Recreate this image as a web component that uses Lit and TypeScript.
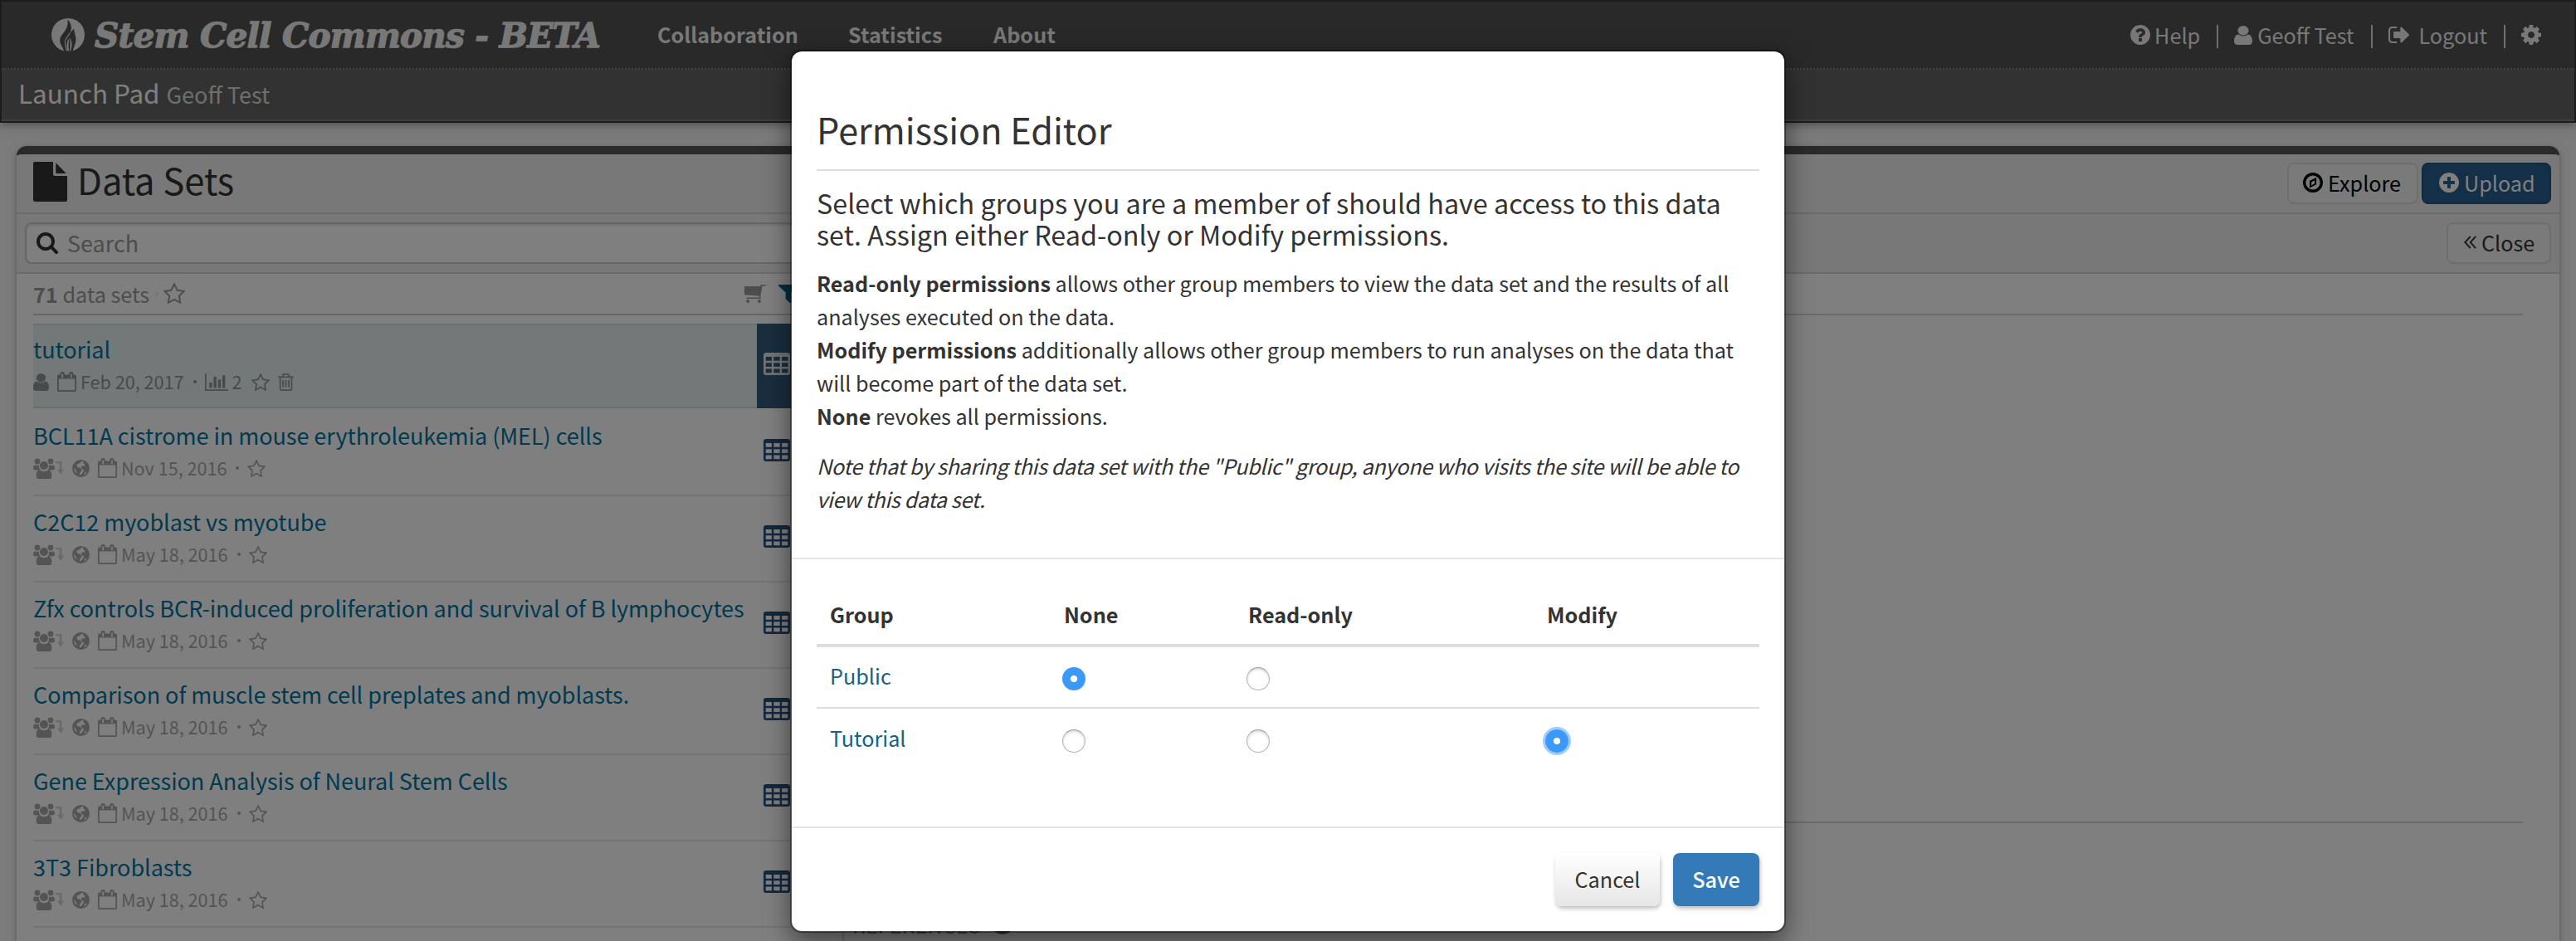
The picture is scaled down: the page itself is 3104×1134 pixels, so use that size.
import { LitElement, html, css, svg } from "lit";
import { customElement } from "lit/decorators.js";
import { classMap } from "lit/directives/class-map.js";

interface Glyph {
  box: string;
  body: unknown;
}

const disc =
  "M1664 896q0 209-103 385.5t-279.5 279.5-385.5 103-385.5-103-279.5-279.5-103-385.5 103-385.5 279.5-279.5 385.5-103 385.5 103 279.5 279.5 103 385.5z";

const glyphs: Record<string, Glyph> = {
  logo: {
    box: "0 0 40 40",
    body: svg`<circle cx="20" cy="20" r="20"/><path fill="#525252" d="M19.300 1.500C22.800 4.500 24.600 9.500 23.600 14c-.3 1.600-.8 2.900-1.400 4.200 1.300-2.200 3.200-4 5.200-5.200-.4 4.400 2.400 8 2 13.400-.3 5-2.800 8.200-4 13.800H15.200C14.400 35 9.800 31.500 10.200 26c.4-4.800 4-7.600 6.600-11.600C19 10.800 20.200 6.600 19.300 1.500z"/><path fill="none" stroke="currentColor" stroke-width="1.100" d="M22.600 17.500c-2.400 4-6 6.500-6.200 11.500-.1 3.600 1 6.600 1.800 10.500"/><path d="M21.600 23.500c-3.200 4.200-3.800 9.600-2.200 16h1.800c-1-5.500-.8-10.500.4-16zM22 23.500c1.800 3.200 3.400 7.500 2.200 12-.4 1.500-.9 2.800-1.200 4h-.9c.4-5.500.6-10.500-.1-16z"/>`,
  },
  help: {
    box: "128 128 1536 1536",
    body: svg`<path fill-rule="evenodd" d="M1024 1376v-192q0-14-9-23t-23-9h-192q-14 0-23 9t-9 23v192q0 14 9 23t23 9h192q14 0 23-9t9-23zm256-672q0-88-55.5-163t-138.5-116-170-41q-243 0-371 213-15 24 8 42l132 100q7 6 19 6 16 0 25-12 53-68 86-92 34-24 86-24 48 0 85.5 26t37.500 59q0 38-20 61t-68 45q-63 28-115.500 86.500t-52.500 125.500v36q0 14 9 23t23 9h192q14 0 23-9t9-23q0-19 21.500-49.500t54.500-49.500q32-18 49-28.500t46-35 44.500-48 28-60.500 12.500-81z${disc}"/>`,
  },
  user: {
    box: "256 128 1280 1536",
    body: svg`<path d="M1536 1399q0 109-62.500 187t-150.500 78h-854q-88 0-150.500-78t-62.500-187q0-85 8.500-160.500t31.500-152 58.500-131 94-89 134.500-34.500q131 128 313 128t313-128q76 0 134.500 34.500t94 89 58.500 131 31.500 152 8.500 160.500zm-256-887q0 159-112.500 271.500t-271.500 112.500-271.500-112.500-112.500-271.500 112.500-271.500 271.500-112.500 271.500 112.500 112.500 271.500z"/>`,
  },
  logout: {
    box: "64 256 1568 1280",
    body: svg`<path d="M704 1440q0 4 1 20t.5 26.500-3 23.500-10 19.500-20.500 6.500h-320q-119 0-203.500-84.500t-84.500-203.500v-704q0-119 84.500-203.500t203.500-84.500h320q13 0 22.500 9.500t9.500 22.500q0 4 1 20t.5 26.500-3 23.500-10 19.500-20.500 6.500h-320q-66 0-113 47t-47 113v704q0 66 47 113t113 47h312l11.500 1 11.500 3 8 5.500 7 9 2 13.500zm928-544q0 26-19 45l-544 544q-19 19-45 19t-45-19-19-45v-288h-448q-26 0-45-19t-19-45v-384q0-26 19-45t45-19h448v-288q0-26 19-45t45-19 45 19l544 544q19 19 19 45z"/>`,
  },
  gear: {
    box: "128 128 1536 1536",
    body: svg`<path d="M1152 896q0-106-75-181t-181-75-181 75-75 181 75 181 181 75 181-75 75-181zm512-109v222q0 12-8 23t-20 13l-185 28q-19 54-39 91 35 50 107 138 10 12 10 25t-9 23q-27 37-99 108t-94 71q-12 0-26-9l-138-108q-44 23-91 38-16 136-29 186-7 28-36 28h-222q-14 0-24.500-8.500t-11.500-21.500l-28-184q-49-16-90-37l-141 107q-10 9-25 9-14 0-25-11-126-114-165-168-7-10-7-23 0-12 8-23 15-21 51-66.500t54-70.500q-27-50-41-99l-183-27q-13-2-21-12.500t-8-23.500v-222q0-12 8-23t19-13l186-28q14-46 39-92-40-57-107-138-10-12-10-24 0-10 9-23 26-36 98.500-107.500t94.500-71.500q13 0 26 10l138 107q44-23 91-38 16-136 29-186 7-28 36-28h222q14 0 24.500 8.500t11.500 21.500l28 184q49 16 90 37l142-107q9-9 24-9 13 0 25 10 129 119 165 170 7 8 7 22 0 12-8 23-15 21-51 66.500t-54 70.500q26 50 41 98l183 28q13 2 21 12.500t8 23.500z"/>`,
  },
  plus: {
    box: "128 128 1536 1536",
    body: svg`<path fill-rule="evenodd" d="M1344 960v-128q0-26-19-45t-45-19h-256v-256q0-26-19-45t-45-19h-128q-26 0-45 19t-19 45v256h-256q-26 0-45 19t-19 45v128q0 26 19 45t45 19h256v256q0 26 19 45t45 19h128q26 0 45-19t19-45v-256h256q26 0 45-19t19-45z${disc}"/>`,
  },
  compass: {
    box: "0 0 24 24",
    body: svg`<circle cx="12" cy="12" r="10.300" fill="none" stroke="currentColor" stroke-width="3.400"/><path fill-rule="evenodd" d="M16.200 5.800v8.400l-8.200 4.200V10zM10.200 11.400v4L14 13.200V9.600z"/>`,
  },
  chevrons: {
    box: "0 0 15 16",
    body: svg`<path fill="none" stroke="currentColor" stroke-width="1.900" d="M7.800.8 1.300 8l6.500 7.200M14.200.8 7.700 8l6.500 7.200"/>`,
  },
  file: {
    box: "0 0 41 48",
    body: svg`<path d="M2 0h22v14.500q0 2.500 2.500 2.500H41v29q0 2-2 2H2q-2 0-2-2V2q0-2 2-2zM27.300 1.200 39.800 14H27.300z"/>`,
  },
  search: {
    box: "64 128 1664 1664",
    body: svg`<path d="M1216 832q0-185-131.500-316.500t-316.500-131.500-316.500 131.500-131.500 316.500 131.500 316.500 316.500 131.500 316.500-131.500 131.500-316.500zm512 832q0 52-38 90t-90 38q-54 0-90-38l-343-342q-179 124-399 124-143 0-273.500-55.500t-225-150-150-225-55.500-273.500 55.500-273.500 150-225 225-150 273.500-55.500 273.500 55.500 225 150 150 225 55.500 273.500q0 220-124 399l343 343q37 37 37 90z"/>`,
  },
  star: {
    box: "64 32 1664 1587",
    body: svg`<path d="M1201 1004l306-297-422-62-189-382-189 382-422 62 306 297-73 421 378-199 377 199zm527-357q0 22-26 48l-363 354 86 500q1 7 1 20 0 50-41 50-19 0-40-12l-449-236-449 236q-22 12-40 12-21 0-31.500-14.500t-10.500-35.500q0-6 2-20l86-500-364-354q-25-27-25-48 0-37 56-46l502-73 225-455q19-41 49-41t49 41l225 455 502 73q56 9 56 46z"/>`,
  },
  trash: {
    box: "192 128 1408 1536",
    body: svg`<path d="M704 736v576q0 14-9 23t-23 9h-64q-14 0-23-9t-9-23v-576q0-14 9-23t23-9h64q14 0 23 9t9 23zm256 0v576q0 14-9 23t-23 9h-64q-14 0-23-9t-9-23v-576q0-14 9-23t23-9h64q14 0 23 9t9 23zm256 0v576q0 14-9 23t-23 9h-64q-14 0-23-9t-9-23v-576q0-14 9-23t23-9h64q14 0 23 9t9 23zm128 724v-948h-896v948q0 22 7 40.500t14.500 27 10.500 8.500h832q3 0 10.500-8.500t14.500-27 7-40.500zm-672-1076h448l-48-117q-7-9-17-11h-317q-10 2-17 11zm928 32v64q0 14-9 23t-23 9h-96v948q0 83-47 143.500t-113 60.500h-832q-66 0-113-58.500t-47-141.500v-952h-96q-14 0-23-9t-9-23v-64q0-14 9-23t23-9h309l70-167q15-37 54-63t79-26h320q40 0 79 26t54 63l70 167h309q14 0 23 9t9 23z"/>`,
  },
  calendar: {
    box: "64 0 1664 1792",
    body: svg`<path fill-rule="evenodd" d="M192 1664h1408v-1024h-1408v1024zm384-1152v-288q0-14-9-23t-23-9h-64q-14 0-23 9t-9 23v288q0 14 9 23t23 9h64q14 0 23-9t9-23zm768 0v-288q0-14-9-23t-23-9h-64q-14 0-23 9t-9 23v288q0 14 9 23t23 9h64q14 0 23-9t9-23zm384-128v1280q0 52-38 90t-90 38h-1408q-52 0-90-38t-38-90v-1280q0-52 38-90t90-38h128v-96q0-66 47-113t113-47h64q66 0 113 47t47 113v96h384v-96q0-66 47-113t113-47h64q66 0 113 47t47 113v96h128q52 0 90 38t38 90z"/>`,
  },
  chart: {
    box: "0 0 28 21",
    body: svg`<path d="M0 0h1.700v19.300H28V21H0zM5.200 11h3.400v6.500H5.200zM10.400 4h3.400v13.500h-3.400zM15.700 7.500h3.400v10h-3.400zM21 2.200h3.400v15.300H21z"/>`,
  },
  group: {
    box: "0 0 26 25",
    body: svg`<circle cx="5" cy="4" r="3.400"/><circle cx="21" cy="4" r="3.400"/><circle cx="13" cy="9" r="5"/><path d="M2.200 8.200q2.800 1.600 5 0-.9 3.800 1.600 6.200H2.300Q0 14.400 0 12.200q0-3 2.200-4zM23.800 8.200q-2.800 1.600-5 0 .9 3.800-1.600 6.200h6.500q2.300 0 2.300-2.200 0-3-2.200-4zM7.600 14.600q5.400 3.600 10.800 0 4 .6 4 6.800 0 3.600-3.200 3.600H6.800q-3.200 0-3.200-3.600 0-6.200 4-6.800z"/>`,
  },
  arrow: {
    box: "0 0 10 16",
    body: svg`<path d="M0 0h7.400v9.800H10L6.100 16 2.200 9.800h2.600V2.600H0z"/>`,
  },
  globe: {
    box: "0 0 21 21",
    body: svg`<path fill-rule="evenodd" d="M10.500 0a10.500 10.500 0 1 1 0 21 10.500 10.500 0 0 1 0-21zM12.600 1.500l-2.400 1.300-1.400 2-2.400.3-1.200 2.500 1.700 1.600 2.600.4 2.200 2.200-1 2.200-1.600 1.800.2 3.200 3.400-3.600 1.500-2.600-2.200-1.600-1.600-2.300 2.200-1.300 2-.2 1.200-1.500-1.800-1.200zM1.600 9.600l1.300 4.200 2.700 3-.6-3.400zM15.800 14.600l-1.600 3.800q2.200-1 3.400-3.200z"/>`,
  },
  cart: {
    box: "0 0 26 22",
    body: svg`<path d="M0 2h19.200l.8-2h6v1.600h-4.400L19.400 13.800 0 12.200zM17.600 13.600h1.800v2.200h-1.800zM2.400 15.600h17.200V17H2.400z"/><circle cx="4.200" cy="20" r="2"/><circle cx="18" cy="20" r="2"/>`,
  },
  filter: {
    box: "192 256 1408 1408",
    body: svg`<path d="M1595 295q17 41-14 70l-493 493v742q0 42-39 59-13 5-25 5-27 0-45-19l-256-256q-19-19-19-45v-486l-493-493q-31-29-14-70 17-39 59-39h1280q42 0 59 39z"/>`,
  },
  table: {
    box: "0 0 32 27",
    body: svg`<path fill-rule="evenodd" d="M3 0h26q3 0 3 3v21q0 3-3 3H3q-3 0-3-3V3q0-3 3-3zM2.700 5v4.700h7.200V5zm9.600 0v4.700h7.400V5zm9.800 0v4.700h7.300V5zM2.700 12.200v4.700h7.200v-4.700zm9.600 0v4.700h7.400v-4.700zm9.800 0v4.700h7.300v-4.700zM2.700 19.400v4.800h7.200v-4.800zm9.600 0v4.800h7.400v-4.800zm9.800 0v4.800h7.300v-4.800z"/>`,
  },
};

const icon = (name: string) => html`<svg
  class="icon ${name}"
  viewBox=${glyphs[name].box}
  preserveAspectRatio="none"
  aria-hidden="true"
>${glyphs[name].body}</svg>`;

const shared = css`
  * {
    box-sizing: border-box;
  }
  .icon {
    display: block;
    flex: none;
    fill: currentColor;
  }
`;

interface DataSet {
  title: string;
  date: string;
  own?: boolean;
  analyses?: number;
}

const dataSets: DataSet[] = [
  { title: "tutorial", date: "Feb 20, 2017", own: true, analyses: 2 },
  { title: "BCL11A cistrome in mouse erythroleukemia (MEL) cells", date: "Nov 15, 2016" },
  { title: "C2C12 myoblast vs myotube", date: "May 18, 2016" },
  { title: "Zfx controls BCR-induced proliferation and survival of B lymphocytes", date: "May 18, 2016" },
  { title: "Comparison of muscle stem cell preplates and myoblasts.", date: "May 18, 2016" },
  { title: "Gene Expression Analysis of Neural Stem Cells", date: "May 18, 2016" },
  { title: "3T3 Fibroblasts", date: "May 18, 2016" },
];

@customElement("site-header")
export class SiteHeader extends LitElement {
  static styles = [
    shared,
    css`
      :host {
        display: block;
        height: 148px;
        border: 2px solid #383838;
        box-shadow: 0 2px 10px rgba(0, 0, 0, 0.4);
      }
      .bar {
        display: flex;
        height: 82px;
        background: #525252;
        border-bottom: 2px dotted #868686;
        color: #f0f0f0;
        font-size: 25.2px;
        line-height: 78px;
        white-space: nowrap;
      }
      .icon.logo {
        width: 40px;
        height: 40px;
        margin: 20px 12px 0 60px;
      }
      .brand {
        width: 678px;
        font: italic bold 40.5px/82px "DejaVu Serif", serif;
        letter-spacing: -0.75px;
        -webkit-text-stroke: 1.3px currentColor;
      }
      .nav {
        font-weight: bold;
      }
      .nav.first {
        width: 230px;
      }
      .nav.second {
        width: 175px;
      }
      .tools {
        display: flex;
        align-items: center;
        height: 80px;
        margin-left: auto;
        padding-right: 40px;
      }
      .pipe {
        width: 2px;
        height: 28px;
        margin: 4px 19px 0 20px;
        background: #dedede;
      }
      .help,
      .gear {
        width: 24px;
        height: 24px;
      }
      .help {
        margin-right: 5px;
      }
      .user {
        width: 22px;
        height: 23px;
        margin-right: 6px;
      }
      .logout {
        width: 25px;
        height: 20px;
        margin-right: 12px;
      }
      .sub {
        display: flex;
        height: 62px;
        background: #646464;
        border-bottom: 2px solid #7c7c7c;
        padding-left: 20px;
        color: #fff;
        font-size: 31.4px;
        line-height: 56px;
        white-space: nowrap;
      }
      .who {
        margin-left: 8px;
        font-size: 27px;
        line-height: 60px;
        color: #dcdcdc;
      }
    `,
  ];

  render() {
    return html`
      <div class="bar">
        ${icon("logo")}
        <span class="brand">Stem Cell Commons - BETA</span>
        <span class="nav first">Collaboration</span>
        <span class="nav second">Statistics</span>
        <span class="nav">About</span>
        <div class="tools">
          ${icon("help")}<span>Help</span><i class="pipe"></i>
          ${icon("user")}<span>Geoff Test</span><i class="pipe"></i>
          ${icon("logout")}<span>Logout</span><i class="pipe"></i>
          ${icon("gear")}
        </div>
      </div>
      <div class="sub"><span>Launch Pad</span><span class="who">Geoff Test</span></div>
    `;
  }
}

@customElement("data-set-row")
export class DataSetRow extends LitElement {
  static properties = { item: { attribute: false } };
  declare item: DataSet;

  static styles = [
    shared,
    css`
      :host {
        display: block;
      }
      .row {
        display: flex;
        height: 104px;
        border-bottom: 2px solid #e8e8e8;
        white-space: nowrap;
      }
      .row.active {
        height: 102px;
        margin-bottom: 2px;
        background: #e6f0f1;
        border-top: 2px solid #d6e3e6;
        border-bottom: 2px solid #cfdde3;
      }
      .text {
        width: 872px;
        padding-top: 11px;
      }
      .active .text {
        padding-top: 9px;
      }
      .title {
        font-size: 27px;
        line-height: 40px;
        letter-spacing: -0.04px;
        color: #0074a2;
      }
      .meta {
        display: flex;
        align-items: center;
        height: 24px;
        margin-top: 7px;
        font-size: 21.6px;
        line-height: 24px;
        color: #a9a9a9;
      }
      .active .meta {
        color: #8f9797;
      }
      .user {
        width: 19px;
        height: 21px;
        margin-right: 10px;
      }
      .group {
        width: 26px;
        height: 25px;
        margin-right: 1px;
      }
      .arrow {
        width: 10px;
        height: 16px;
        margin-right: 10px;
        opacity: 0.5;
      }
      .globe {
        width: 21px;
        height: 21px;
        margin-right: 10px;
      }
      .calendar {
        width: 23px;
        height: 24px;
        margin-right: 5px;
      }
      .dot {
        width: 4px;
        height: 4px;
        margin: 0 10px 0 11px;
        border-radius: 2px;
        background: currentColor;
      }
      .star {
        width: 22px;
        height: 21px;
      }
      .chart {
        width: 28px;
        height: 21px;
        margin-right: 5px;
      }
      .count {
        margin-right: 11px;
      }
      .trash {
        width: 19px;
        height: 21px;
        margin-left: 10px;
      }
      .side {
        flex: 1;
        padding: 35px 0 0 8px;
        color: #255180;
      }
      .active .side {
        margin: -2px 0;
        background: #345c7c;
        color: #e8e8e8;
      }
      .table {
        width: 32px;
        height: 27px;
      }
    `,
  ];

  render() {
    const d = this.item;
    return html`
      <div class=${classMap({ row: true, active: !!d.own })}>
        <div class="text">
          <div class="title">${d.title}</div>
          <div class="meta">
            ${d.own ? icon("user") : html`${icon("group")}${icon("arrow")}${icon("globe")}`}
            ${icon("calendar")}<span>${d.date}</span><i class="dot"></i>
            ${d.analyses ? html`${icon("chart")}<span class="count">${d.analyses}</span>` : ""}
            ${icon("star")}${d.own ? icon("trash") : ""}
          </div>
        </div>
        <div class="side">${icon("table")}</div>
      </div>
    `;
  }
}

@customElement("data-set-panel")
export class DataSetPanel extends LitElement {
  static styles = [
    shared,
    css`
      :host {
        display: block;
        margin: 28px 20px 0;
        border-top: 10px solid #545454;
        border-radius: 12px 12px 0 0;
        background: #fff;
        box-shadow: 0 2px 6px rgba(0, 0, 0, 0.35);
        height: 958px;
        overflow: hidden;
      }
      .head,
      .tools {
        display: flex;
        height: 72px;
        padding: 0 10px;
        background: #f0f0f0;
        border-bottom: 2px solid #d6d6d6;
        white-space: nowrap;
      }
      .icon.file {
        width: 41px;
        height: 48px;
        margin: 9px 12px 0 10px;
        color: #333;
      }
      .name {
        flex: 1;
        font-size: 43.5px;
        line-height: 62px;
        color: #333;
      }
      .button {
        display: flex;
        align-items: center;
        height: 50px;
        margin-top: 10px;
        border: 2px solid #dcdcdc;
        border-radius: 8px;
        background: #f4f4f4;
        padding: 0 0 2px 17px;
        font-size: 25.2px;
        line-height: 44px;
        color: #000;
        width: 158px;
      }
      .button .icon {
        width: 24px;
        height: 24px;
        margin-right: 6px;
      }
      .button.upload {
        width: 156px;
        margin-left: 4px;
        padding-left: 19px;
        background: #285e90;
        border-color: #23507c;
        color: #fff;
      }
      .button.close {
        width: 126px;
        padding-left: 19px;
        color: #333;
      }
      .button .icon.chevrons {
        width: 15px;
        height: 16px;
      }
      .tools {
        justify-content: space-between;
      }
      .query {
        display: flex;
        align-items: center;
        width: 960px;
        height: 50px;
        margin-top: 10px;
        border: 2px solid #ccc;
        border-radius: 8px;
        background: #fff;
        box-shadow: inset 0 2px 3px rgba(0, 0, 0, 0.1);
        padding: 0 0 1px 12px;
        font-size: 27px;
        line-height: 44px;
        color: #999;
      }
      .query .icon {
        width: 26px;
        height: 26px;
        margin-right: 11px;
        color: #333;
      }
      .body {
        display: flex;
      }
      .list {
        width: 997px;
        padding-left: 20px;
        border-right: 2px solid #d8d8d8;
        height: 804px;
      }
      .summary {
        display: flex;
        align-items: center;
        height: 50px;
        border-bottom: 2px solid #cfcfcf;
        margin-bottom: 10px;
        padding-bottom: 1px;
        font-size: 25.2px;
        line-height: 46px;
        color: #9a9a9a;
        white-space: nowrap;
      }
      .summary .star {
        width: 26px;
        height: 25px;
      }
      .point {
        width: 4px;
        height: 4px;
        margin: 0 6px 0 7px;
        border-radius: 2px;
        background: #e8e8e8;
      }
      .icon.cart {
        width: 26px;
        height: 22px;
        margin-left: auto;
      }
      .icon.filter {
        width: 24px;
        height: 22px;
        margin: 0 53px 0 15px;
        color: #006480;
      }
      .rows {
        width: 913px;
      }
      .detail {
        flex: 1;
        padding: 48px 44px 0 10px;
      }
      .rule {
        border-top: 2px solid #d6d6d6;
        height: 612px;
      }
      .section {
        border-top: 2px solid #d6d6d6;
        padding-top: 102px;
        display: flex;
        align-items: center;
        height: 144px;
        font-size: 25.2px;
        line-height: 42px;
        color: #8a8a8a;
      }
      .badge {
        width: 28px;
        height: 28px;
        margin: -4px 0 0 12px;
        border-radius: 14px;
        background: #777;
      }
    `,
  ];

  render() {
    return html`
      <div class="head">
        ${icon("file")}
        <span class="name">Data Sets</span>
        <div class="button">${icon("compass")}<span>Explore</span></div>
        <div class="button upload">${icon("plus")}<span>Upload</span></div>
      </div>
      <div class="tools">
        <div class="query">${icon("search")}<span>Search</span></div>
        <div class="button close">${icon("chevrons")}<span>Close</span></div>
      </div>
      <div class="body">
        <div class="list">
          <div class="summary">
            <span><b>71</b> data sets</span><i class="point"></i>${icon("star")}
            ${icon("cart")}${icon("filter")}
          </div>
          <div class="rows">
            ${dataSets.map((d) => html`<data-set-row .item=${d}></data-set-row>`)}
          </div>
        </div>
        <div class="detail">
          <div class="rule"></div>
          <div class="section"><span>REFERENCES</span><i class="badge"></i></div>
        </div>
      </div>
    `;
  }
}

type Choice = "none" | "read" | "modify";

@customElement("permission-editor")
export class PermissionEditor extends LitElement {
  static styles = [
    shared,
    css`
      :host {
        display: block;
        width: 1200px;
        height: 1064px;
        border: 2px solid rgba(0, 0, 0, 0.4);
        border-radius: 14px;
        background: #fff;
        background-clip: padding-box;
        box-shadow: 0 10px 30px rgba(0, 0, 0, 0.5);
        color: #333;
        font-size: 25.2px;
        line-height: 40px;
      }
      .intro {
        height: 612px;
        border-bottom: 2px solid #e5e5e5;
        padding: 68px 30px 0;
      }
      .title {
        height: 76px;
        border-bottom: 2px solid #ddd;
        font-size: 43.2px;
        line-height: 50px;
      }
      .lead {
        margin-top: 19px;
        font-size: 32.3px;
        line-height: 38px;
        white-space: nowrap;
      }
      .copy {
        margin: 20px 0 20px;
        white-space: nowrap;
        letter-spacing: -0.02px;
      }
      .note {
        font-style: italic;
        white-space: nowrap;
        letter-spacing: -0.36px;
      }
      .groups {
        height: 324px;
        border-bottom: 2px solid #e5e5e5;
        padding: 36px 30px 0;
      }
      .line {
        display: grid;
        grid-template-columns: 298px 222px 360px 1fr;
        align-items: center;
        height: 74px;
        border-bottom: 2px solid #ddd;
      }
      .line:last-child {
        border-bottom: none;
      }
      .line.caption {
        height: 70px;
        border-bottom-width: 4px;
        font-weight: bold;
      }
      .caption span,
      .group {
        padding-left: 16px;
        padding-bottom: 4px;
      }
      .caption span {
        padding-bottom: 6px;
      }
      .caption span + span {
        padding-left: 0;
      }
      .group {
        color: #136382;
      }
      .radio {
        width: 28px;
        height: 28px;
        margin: 4px 0 0 -2px;
        border-radius: 50%;
        border: 1px solid #b4b4b4;
        border-top-color: #9c9c9c;
        background: #fff;
        box-shadow: inset 0 2px 3px rgba(0, 0, 0, 0.16);
      }
      .radio.on {
        border: none;
        background: radial-gradient(circle at 50% 50%, #fff 3.700px, #3b99fc 4.500px);
        box-shadow: none;
      }
      .radio.focus {
        box-shadow: 0 0 0 3px #9ccbfd;
      }
      .actions {
        display: flex;
        justify-content: flex-end;
        padding: 30px 30px 0;
      }
      .button {
        height: 64px;
        border-radius: 8px;
        text-align: center;
        line-height: 62px;
        box-shadow: 1px 3px 5px rgba(0, 0, 0, 0.25);
      }
      .cancel {
        width: 126px;
        margin-right: 16px;
        background: linear-gradient(#fff, #e6e6e6);
      }
      .save {
        width: 104px;
        background: #337ab7;
        color: #fff;
        font-weight: 500;
      }
    `,
  ];

  private radio(state: Choice, value: Choice, focus = false) {
    const on = state === value;
    return html`<i class=${classMap({ radio: true, on, focus: on && focus })}></i>`;
  }

  render() {
    return html`
      <div class="intro">
        <div class="title">Permission Editor</div>
        <div class="lead">
          Select which groups you are a member of should have access to this data<br />
          set. Assign either Read-only or Modify permissions.
        </div>
        <div class="copy">
          <b>Read-only permissions</b> allows other group members to view the data set and the results of all<br />
          analyses executed on the data.<br />
          <b>Modify permissions</b> additionally allows other group members to run analyses on the data that<br />
          will become part of the data set.<br />
          <b>None</b> revokes all permissions.
        </div>
        <div class="note">
          Note that by sharing this data set with the "Public" group, anyone who visits the site will be able to<br />
          view this data set.
        </div>
      </div>
      <div class="groups">
        <div class="line caption">
          <span>Group</span><span>None</span><span>Read-only</span><span>Modify</span>
        </div>
        <div class="line">
          <span class="group">Public</span>${this.radio("none", "none")}${this.radio("none", "read")}
        </div>
        <div class="line">
          <span class="group">Tutorial</span>${this.radio("modify", "none")}${this.radio("modify", "read")}${this.radio("modify", "modify", true)}
        </div>
      </div>
      <div class="actions">
        <div class="button cancel">Cancel</div>
        <div class="button save">Save</div>
      </div>
    `;
  }
}

@customElement("app-root")
export class AppRoot extends LitElement {
  static styles = [
    shared,
    css`
      :host {
        display: block;
        position: relative;
        width: 3104px;
        height: 1134px;
        overflow: hidden;
        background: #f6f6f6;
        font-family: "Noto Sans CJK SC", "Noto Sans", sans-serif;
      }
      .backdrop {
        position: absolute;
        inset: 0;
        background: rgba(0, 0, 0, 0.5);
      }
      .dialog {
        position: absolute;
        left: 952px;
        top: 60px;
      }
    `,
  ];

  render() {
    return html`
      <site-header></site-header>
      <data-set-panel></data-set-panel>
      <div class="backdrop"></div>
      <permission-editor class="dialog"></permission-editor>
    `;
  }
}
